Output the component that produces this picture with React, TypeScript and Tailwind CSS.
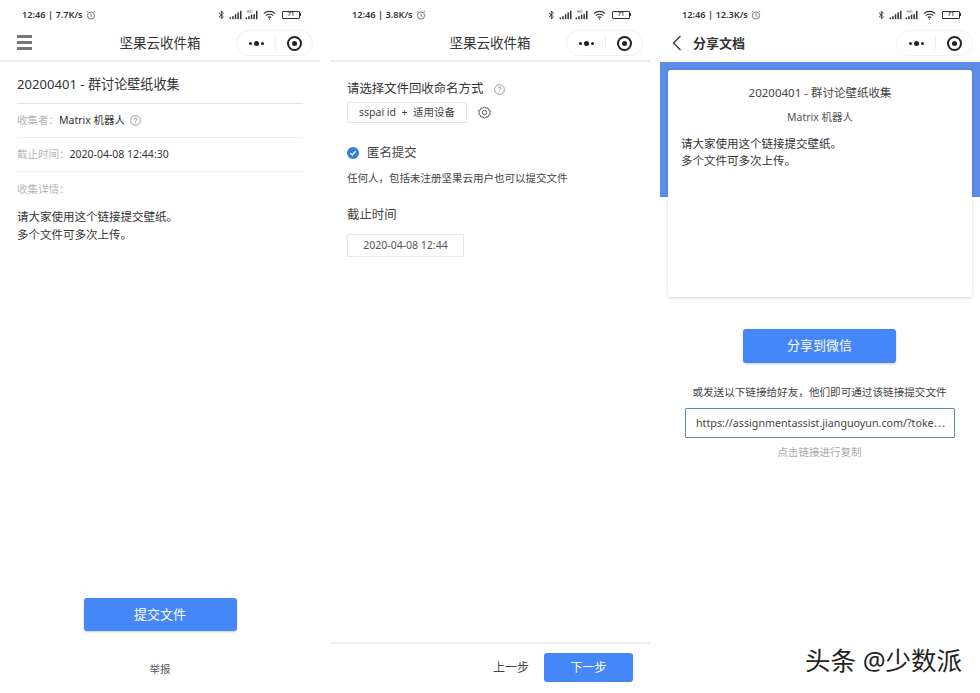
import React from "react";

function Signal({ tag }: { tag?: boolean }) {
  return (
    <svg width="13" height="10" viewBox="0 0 13 10" className="block">
      {tag && <text x="2" y="3.4" fontSize="3.6" fill="#444">HD</text>}
      <rect x="0.6" y="7.4" width="1.5" height="1.8" fill="#333" />
      <rect x="3.2" y="6.2" width="1.5" height="3" fill="#333" />
      <rect x="5.8" y={tag ? 4.6 : 4.2} width="1.5" height={tag ? 4.6 : 5} fill="#333" />
      <rect x="8.4" y={tag ? 4.2 : 2.4} width="1.5" height={tag ? 5 : 6.8} fill="#333" />
      <rect x="11" y="0.8" width="1.5" height="8.4" fill="#333" />
    </svg>
  );
}

function StatusBar({ speed }: { speed: string }) {
  return (
    <div className="h-[29px] flex items-center justify-between pl-[22px] pr-[19px] shrink-0">
      <div className="flex items-center gap-[3px] text-[9.2px] font-semibold text-[#333] leading-none">
        <span>12:46 | {speed}</span>
        <svg width="10" height="10" viewBox="0 0 10 10" fill="none" stroke="#555" strokeWidth="0.8">
          <circle cx="5" cy="5.5" r="3.6" />
          <path d="M5 3.5V5.7L6.4 6.4M0.8 2.2L2.3 1M9.2 2.2L7.7 1" />
        </svg>
      </div>
      <div className="flex items-center gap-[3px]">
        <svg width="7" height="10" viewBox="0 0 7 10" fill="none" stroke="#333" strokeWidth="0.9" className="mr-[1px]">
          <path d="M1 2.8L5.4 6.8L3.3 9V1L5.4 3.2L1 7.2" />
        </svg>
        <Signal />
        <Signal tag />
        <svg width="13" height="10" viewBox="0 0 13 10" fill="none" stroke="#333" strokeWidth="1.1" className="ml-[2px]">
          <path d="M0.8 3.6C4 0.6 9 0.6 12.2 3.6M2.8 5.6C4.8 3.8 8.2 3.8 10.2 5.6M4.8 7.5C5.8 6.7 7.2 6.7 8.2 7.5" />
          <circle cx="6.5" cy="9" r="0.7" fill="#333" stroke="none" />
        </svg>
        <div className="ml-[3px] flex items-center">
          <div className="w-[18px] h-[8px] border border-[#333] rounded-[1px] flex items-center justify-center text-[5.5px] font-semibold text-[#333] leading-none">71</div>
          <div className="w-[1px] h-[3px] bg-[#333]" />
        </div>
      </div>
    </div>
  );
}

function Capsule() {
  return (
    <div className="w-[77px] h-[26px] rounded-full border border-[#f1f1f1] bg-white flex items-center shrink-0">
      <div className="w-[38px] flex items-center justify-center gap-[2px] pl-[1px]">
        <span className="w-[3px] h-[3px] rounded-full bg-[#222]" />
        <span className="w-[5px] h-[5px] rounded-full bg-[#222]" />
        <span className="w-[3px] h-[3px] rounded-full bg-[#222]" />
      </div>
      <div className="w-px h-[14px] bg-[#eeeeee]" />
      <div className="flex-1 flex items-center justify-center">
        <span className="w-[15px] h-[15px] rounded-full border-2 border-[#222] flex items-center justify-center">
          <span className="w-[5px] h-[5px] rounded-full bg-[#222]" />
        </span>
      </div>
    </div>
  );
}

function NavBar({ children, border = true }: { children: React.ReactNode; border?: boolean }) {
  return (
    <div className={`h-[33px] relative flex items-start justify-end pr-[7px] pt-[1px] shrink-0 ${border ? "border-b-2 border-[#ececec]" : ""}`}>
      {children}
      <Capsule />
    </div>
  );
}

function HelpIcon({ size = 11 }: { size?: number }) {
  return (
    <svg width={size} height={size} viewBox="0 0 12 12" fill="none" stroke="#777" strokeWidth="0.8">
      <circle cx="6" cy="6" r="5.3" />
      <path d="M4.4 4.7C4.4 3.7 5.1 3.2 6 3.2C6.9 3.2 7.6 3.8 7.6 4.6C7.6 5.7 6 5.7 6 7.1" />
      <circle cx="6" cy="8.8" r="0.5" fill="#777" stroke="none" />
    </svg>
  );
}

function Screen1() {
  return (
    <div className="w-[320px] flex flex-col h-full">
      <StatusBar speed="7.7K/s" />
      <NavBar>
        <div className="absolute left-[17px] top-[6px] w-[15px] flex flex-col gap-[3px]">
          <span className="h-[3px] bg-[#777]" />
          <span className="h-[3px] bg-[#777]" />
          <span className="h-[3px] bg-[#777]" />
        </div>
        <div className="absolute left-0 right-0 top-[3px] text-center text-[13.5px] leading-[22px] text-[#333]">坚果云收件箱</div>
      </NavBar>
      <div className="px-[17px] flex-1 flex flex-col">
        <div className="h-[42px] flex items-center border-b border-[#e2e2e2] text-[13.1px] text-[#333] pt-[5px]">20200401 - 群讨论壁纸收集</div>
        <div className="h-[34px] flex items-center border-b border-[#eeeeee] text-[10.5px]">
          <span className="text-[#b5b5b5]">收集者：</span>
          <span className="text-[#333]">Matrix 机器人</span>
          <span className="ml-[5px]"><HelpIcon /></span>
        </div>
        <div className="h-[34px] flex items-center border-b border-[#eeeeee] text-[10.5px]">
          <span className="text-[#b5b5b5]">截止时间：</span>
          <span className="text-[#333]">2020-04-08 12:44:30</span>
        </div>
        <div className="h-[36px] flex items-center text-[10.5px] text-[#b5b5b5]">收集详情：</div>
        <div className="text-[11.5px] leading-[18px] text-[#333]">
          请大家使用这个链接提交壁纸。<br />多个文件可多次上传。
        </div>
        <div className="flex-1" />
        <div className="flex justify-center">
          <button className="w-[153px] h-[33px] rounded-[3px] bg-[#4586f8] text-white text-[13px] shadow-[0_1px_2px_rgba(0,0,0,0.2)]">提交文件</button>
        </div>
        <div className="h-[62px] pt-[30px] text-center text-[10.5px] leading-[16px] text-[#555]">举报</div>
      </div>
    </div>
  );
}

function Screen2() {
  return (
    <div className="w-[320px] flex flex-col h-full">
      <StatusBar speed="3.8K/s" />
      <NavBar>
        <div className="absolute left-0 right-0 top-[3px] text-center text-[13.5px] leading-[22px] text-[#333]">坚果云收件箱</div>
      </NavBar>
      <div className="flex-1 px-[17px] pt-[17px] flex flex-col">
        <div className="flex items-center h-[20px] text-[12.4px] text-[#333]">
          请选择文件回收命名方式
          <span className="ml-[11px]"><HelpIcon size={11} /></span>
        </div>
        <div className="mt-[3px] flex items-center gap-[10px]">
          <div className="w-[120px] h-[21px] border border-[#e4e4e4] rounded-[2px] flex items-center justify-center text-[10.5px] text-[#444]">sspai id&nbsp; +&nbsp; 适用设备</div>
          <svg width="15" height="15" viewBox="0 0 24 24" fill="none" stroke="#555" strokeWidth="1.6" className="-mt-[1px]">
            <path d="M12 2.5l2.2 2.6 3.3-.5 1 3.2 3 1.5-1.3 2.7 1.3 2.7-3 1.5-1 3.2-3.3-.5-2.2 2.6-2.2-2.6-3.3.5-1-3.2-3-1.5 1.3-2.7-1.3-2.7 3-1.5 1-3.2 3.3.5z" strokeLinejoin="round" />
            <circle cx="12" cy="12" r="3.5" />
          </svg>
        </div>
        <div className="mt-[20px] flex items-center h-[20px]">
          <span className="w-[12px] h-[12px] rounded-full bg-[#2f80dc] flex items-center justify-center">
            <svg width="8" height="8" viewBox="0 0 8 8" fill="none" stroke="white" strokeWidth="1.3"><path d="M1.4 4.2L3.3 6L6.6 2.3" /></svg>
          </span>
          <span className="ml-[8px] text-[12.4px] text-[#444]">匿名提交</span>
        </div>
        <div className="mt-[7px] h-[16px] leading-[16px] text-[10.5px] text-[#444]">任何人，包括未注册坚果云用户也可以提交文件</div>
        <div className="mt-[19px] h-[20px] leading-[20px] text-[12.4px] text-[#444]">截止时间</div>
        <div className="mt-[9px] w-[117px] h-[23px] border border-[#e6e6e6] flex items-center justify-center text-[10.5px] text-[#555]">2020-04-08 12:44</div>
      </div>
      <div className="h-[51px] border-t-2 border-[#eeeeee] flex items-start justify-end pr-[17px] pt-[9px] shrink-0">
        <span className="h-[29px] leading-[29px] text-[12px] text-[#444] mr-[15px]">上一步</span>
        <button className="w-[89px] h-[29px] rounded-[3px] bg-[#4586f8] text-white text-[12px]">下一步</button>
      </div>
    </div>
  );
}

function Screen3() {
  return (
    <div className="w-[320px] flex flex-col h-full relative">
      <StatusBar speed="12.3K/s" />
      <NavBar border={false}>
        <svg width="10" height="16" viewBox="0 0 10 16" fill="none" stroke="#333" strokeWidth="1.3" className="absolute left-[12px] top-[6px]">
          <path d="M8.5 1L1.5 8L8.5 15" />
        </svg>
        <div className="absolute left-[33px] top-[3px] text-[13px] font-semibold leading-[22px] text-[#333]">分享文档</div>
      </NavBar>
      <div className="h-[135px] bg-[#5b8de8] px-[8px] pt-[8px] shrink-0">
        <div className="h-[227px] bg-white rounded-[3px] shadow-[0_1px_3px_rgba(0,0,0,0.18)] relative z-10 pt-[13px] px-[13px]">
          <div className="text-center text-[11.5px] leading-[20px] text-[#444]">20200401 - 群讨论壁纸收集</div>
          <div className="mt-[4px] text-center text-[10.5px] leading-[20px] text-[#555]">Matrix 机器人</div>
          <div className="mt-[8px] text-[11.5px] leading-[17px] text-[#333]">请大家使用这个链接提交壁纸。<br />多个文件可多次上传。</div>
        </div>
      </div>
      <div className="flex flex-col items-center pt-[132px] pr-[1px]">
        <button className="w-[153px] h-[34px] rounded-[3px] bg-[#4586f8] text-white text-[13px] shadow-[0_1px_2px_rgba(0,0,0,0.2)]">分享到微信</button>
        <div className="mt-[21px] text-[10.6px] leading-[16px] text-[#444]">或发送以下链接给好友，他们即可通过该链接提交文件</div>
        <div className="mt-[8px] ml-[1px] w-[270px] h-[30px] border border-[#5f89a8] rounded-[1px] px-[10px] flex items-center text-[10.7px] text-[#444] whitespace-nowrap">
          https://assignmentassist.jianguoyun.com/?toke⋯
        </div>
        <div className="mt-[6px] text-[10.5px] leading-[16px] text-[#a9a9a9]">点击链接进行复制</div>
      </div>
      <div className="absolute left-[145px] top-[645px] text-[25.5px] leading-[30px] text-[#222]">头条 @少数派</div>
    </div>
  );
}

export default function App() {
  return (
    <div className="w-[980px] h-[693px] bg-white flex gap-[10px] overflow-hidden font-['Noto_Sans','Noto_Sans_CJK_SC',sans-serif]">
      <Screen1 />
      <Screen2 />
      <Screen3 />
    </div>
  );
}
